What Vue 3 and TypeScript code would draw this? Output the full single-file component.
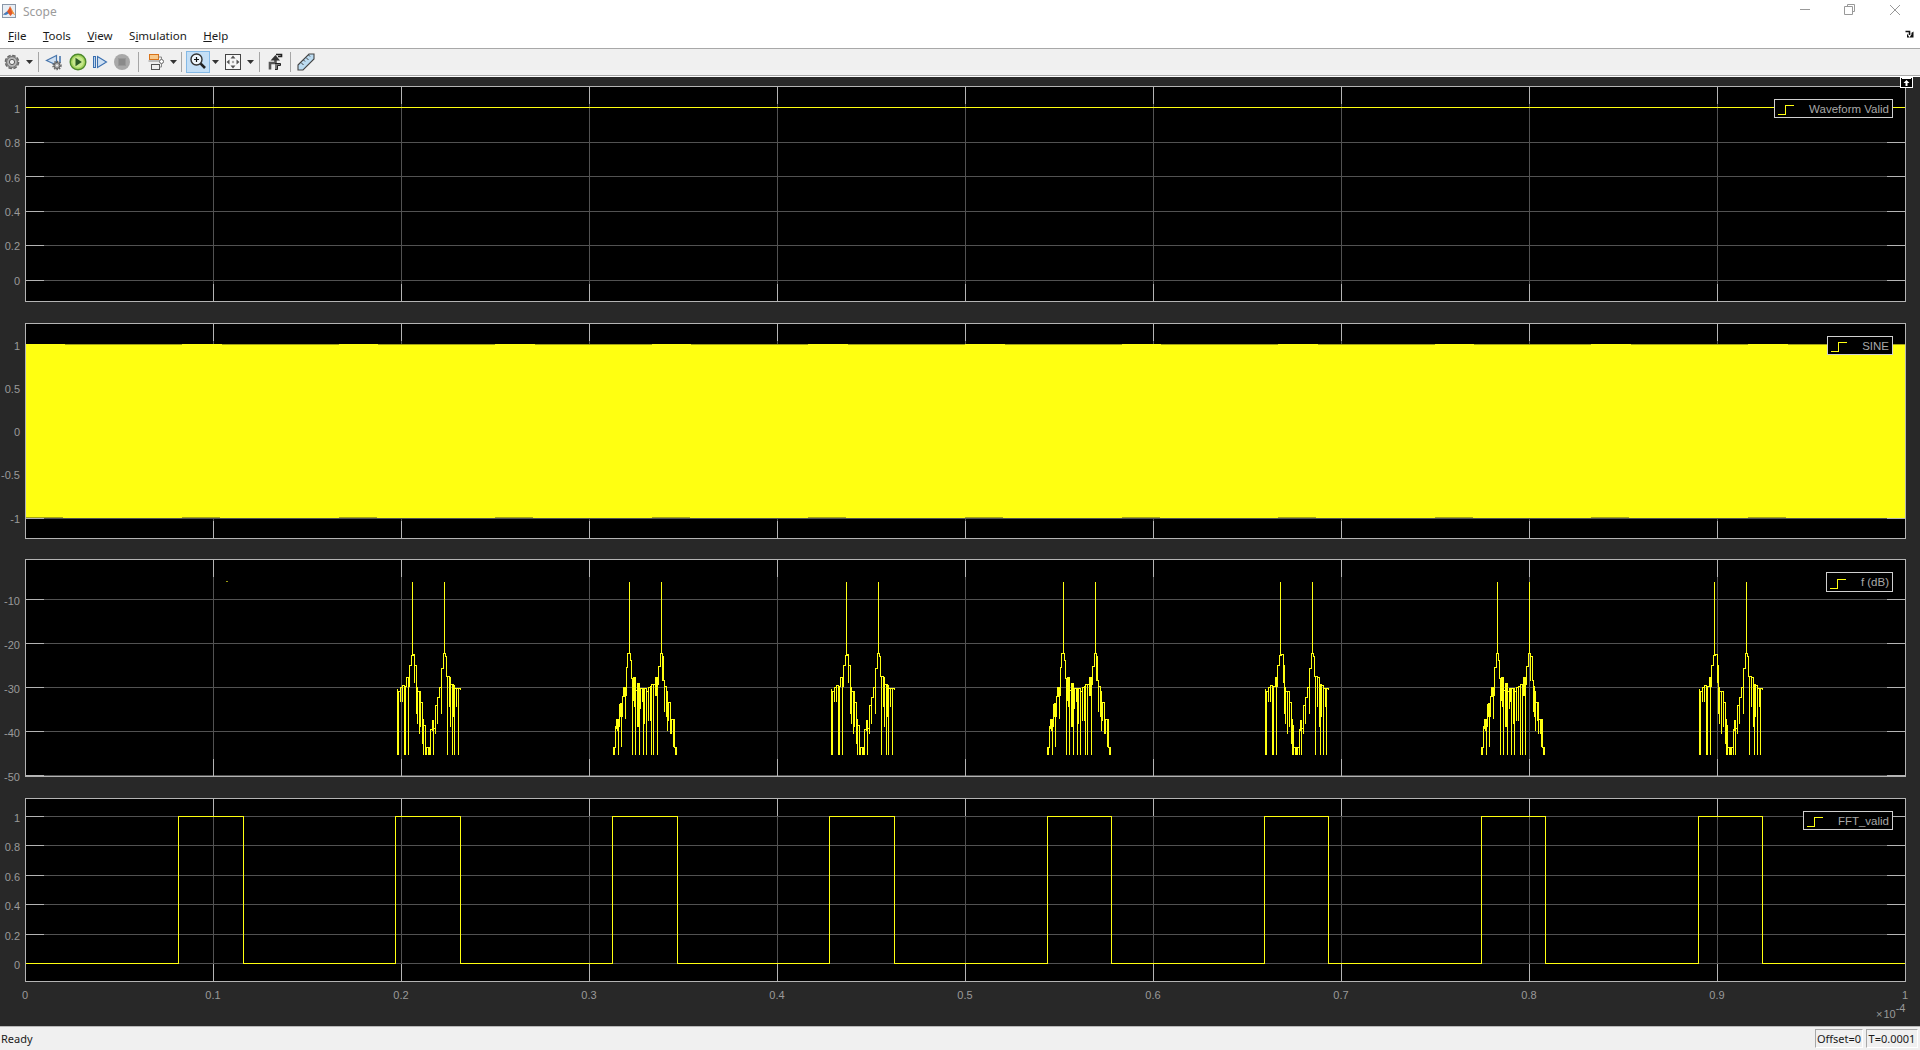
<script setup lang="ts">
type Tick = { label: string; y: number; base?: number }
type Entry = [number, number, number?]

interface Axis {
  name: string
  top: number
  height: number
  boxBottom: number
  ticks: Tick[]
  legendTop: number
  legendHeight: number
}

const xTicks = Array.from({ length: 11 }, (_, i) => ({
  x: 25.5 + i * 188,
  label: i === 0 ? '0' : i === 10 ? '1' : `0.${i}`,
}))

const axes: Axis[] = [
  {
    name: 'Waveform Valid', top: 86, height: 217, boxBottom: 301.5, legendTop: 13, legendHeight: 19,
    ticks: [
      { label: '1', y: 107.5, base: 113 }, { label: '0.8', y: 142.5, base: 147 }, { label: '0.6', y: 176.5, base: 182 },
      { label: '0.4', y: 211.5, base: 216 }, { label: '0.2', y: 245.5, base: 250 }, { label: '0', y: 280.5, base: 285 },
    ],
  },
  {
    name: 'SINE', top: 323, height: 216, boxBottom: 538.5, legendTop: 13, legendHeight: 19,
    ticks: [
      { label: '1', y: 344.5, base: 350 }, { label: '0.5', y: 387.5, base: 393 }, { label: '0', y: 431.5, base: 436 },
      { label: '-0.5', y: 474.5, base: 479 }, { label: '-1', y: 518.5, base: 523 },
    ],
  },
  {
    name: 'f (dB)', top: 559, height: 219, boxBottom: 776.5, legendTop: 13, legendHeight: 20,
    ticks: [
      { label: '-10', y: 599.5 }, { label: '-20', y: 643.5 }, { label: '-30', y: 687.5 },
      { label: '-40', y: 731.5 }, { label: '-50', y: 775.5 },
    ],
  },
  {
    name: 'FFT_valid', top: 798, height: 228, boxBottom: 981.5, legendTop: 13, legendHeight: 19,
    ticks: [
      { label: '1', y: 816.5 }, { label: '0.8', y: 845.5 }, { label: '0.6', y: 875.5 },
      { label: '0.4', y: 904.5 }, { label: '0.2', y: 934.5 }, { label: '0', y: 963.5 },
    ],
  },
]

const PERIOD = 217.1

/* Spectrum trace read off the reference, in 3x crop coordinates. */
const clusterA: Entry[] = [
  [48, 388], [52, 395, 583], [54, 395, 583], [60, 383, 425], [66, 375, 425], [72, 378, 583], [75, 378, 583],
  [80, 352], [85, 380, 583], [88, 315], [94, 285], [96, 285, 64], [100, 283], [104, 315, 368], [108, 383, 460],
  [112, 395, 490], [118, 395, 520], [122, 428, 500], [128, 478, 550], [131, 495, 583], [136, 563, 583],
  [140, 563, 583], [144, 563, 583], [147, 563, 583], [152, 508, 583], [156, 480, 510], [160, 505, 583],
  [165, 435, 520], [172, 412, 490], [178, 382, 410], [184, 325, 460], [190, 280], [193, 280, 64], [196, 290],
  [199, 350], [202, 350, 583], [208, 352, 440], [212, 372, 500], [216, 372, 583], [219, 375, 470], [224, 385, 583],
  [230, 385, 440], [235, 385, 583], [240, 388],
]

const clusterB: Entry[] = [
  [40, 562, 583], [43, 562, 583], [46, 500], [49, 478, 505], [52, 478, 510], [55, 490, 583], [58, 432, 500],
  [61, 430, 470], [64, 430, 560], [67, 408, 470], [70, 382, 408], [73, 382, 408], [76, 405, 475], [80, 322],
  [84, 280], [88, 280, 64], [92, 300], [95, 355], [97, 355, 583], [101, 352, 420], [104, 352, 440], [107, 390, 583],
  [112, 370, 500], [115, 370, 500], [118, 395, 583], [123, 385, 445], [127, 385, 425], [130, 385, 583],
  [135, 385, 490], [140, 395, 583], [146, 382, 480], [151, 378, 480], [156, 372, 583], [162, 372, 583],
  [166, 352, 405], [169, 352, 405], [172, 372, 583], [176, 318], [181, 280], [184, 280, 64], [188, 290, 360],
  [192, 360], [195, 380, 455], [199, 395, 470], [203, 428, 510], [207, 428, 480], [212, 478, 520], [216, 478, 520],
  [220, 478, 560], [224, 562], [227, 562, 583], [230, 562, 583],
]

function px(v: number): number {
  return Math.floor(v) + 0.5
}

function tracePath(entries: Entry[], x0: number, origin: number): string {
  let d = ''
  entries.forEach(([zx, top, excursion], i) => {
    const x = px(x0 + (zx - origin) / 3)
    const y = px(560 + top / 3)
    d += i === 0 ? `M${x} ${y}` : `H${x}V${y}`
    if (excursion !== undefined) d += `V${px(560 + excursion / 3)}V${y}`
  })
  return d
}

const spectrum = Array.from({ length: 7 }, (_, k) => {
  const x0 = 396 + k * PERIOD
  return k % 2 === 0 ? tracePath(clusterA, x0, 48) : tracePath(clusterB, x0, 40)
}).join('')

const validPath = (() => {
  let d = 'M25.5 963.5'
  for (let k = 0; k < 8; k++) {
    const rise = px(178.6 + k * PERIOD)
    const fall = px(243.5 + k * 217)
    d += `H${rise}V816.5H${fall}V963.5`
  }
  return d + 'H1905.5'
})()

/* Faint aliasing bands along the edges of the sine fill. */
const sineEdges = (() => {
  let d = ''
  for (let k = -1; k < 12; k++) {
    const a = 65 + k * 156.6
    const b = 182 + k * 156.6
    const c = 220 + k * 156.6
    d += `M${Math.max(a, 26)} 344.5H${Math.min(b, 1905)}`
    d += `M${Math.max(b, 26)} 517.5H${Math.min(c, 1905)}`
  }
  return d
})()

const menu = [
  { key: 'F', rest: 'ile', pre: '' },
  { key: 'T', rest: 'ools', pre: '' },
  { key: 'V', rest: 'iew', pre: '' },
  { key: 'i', rest: 'mulation', pre: 'S' },
  { key: 'H', rest: 'elp', pre: '' },
]

const tools = [
  { id: 'gear', w: 24 }, { id: 'arrow', w: 10 }, { id: 'sep', w: 8 },
  { id: 'back', w: 24 }, { id: 'play', w: 23 }, { id: 'step', w: 22 }, { id: 'stop', w: 22 }, { id: 'sep', w: 11 },
  { id: 'block', w: 26 }, { id: 'arrow', w: 6 }, { id: 'sep', w: 10 },
  { id: 'zoom', w: 24 }, { id: 'arrow', w: 11 }, { id: 'fit', w: 24 }, { id: 'arrow', w: 10 }, { id: 'sep', w: 8 },
  { id: 'signal', w: 24 }, { id: 'sep', w: 7 }, { id: 'ruler', w: 24 },
]
</script>

<template>
  <div class="window">
    <header class="titlebar">
      <svg class="logo" width="14" height="14" viewBox="0 0 14 14">
        <rect x="0.5" y="0.5" width="13" height="13" fill="#e8eef5" stroke="#8a97a8" />
        <path d="M1 10.5 L5 7.5 L7 4.5 L8 2 L10 6 L13 11 L10.5 9.5 L8.5 12 L6.5 9.5 Z" fill="#e2582a" />
        <path d="M1 10.5 L5 7.5 L6.5 9.5 L4 11 Z" fill="#3f7fc4" />
        <path d="M8 2 L10 6 L13 11 L10.5 9.5 Z" fill="#f2a03a" />
      </svg>
      <span class="title">Scope</span>
      <div class="winctl">
        <svg width="12" height="12" viewBox="0 0 12 12"><path d="M1 5.5H11" stroke="#999" fill="none" /></svg>
        <svg width="12" height="12" viewBox="0 0 12 12">
          <path d="M3.5 2.5V0.5H10.5V7.5H8.5M0.5 2.5H8.5V10.5H0.5Z" stroke="#999" fill="none" />
        </svg>
        <svg width="12" height="12" viewBox="0 0 12 12"><path d="M1 1L11 11M11 1L1 11" stroke="#999" fill="none" /></svg>
      </div>
    </header>

    <nav class="menubar">
      <span v-for="m in menu" :key="m.key" class="menu-item">{{ m.pre }}<u>{{ m.key }}</u>{{ m.rest }}</span>
      <svg class="undock" width="9" height="8" viewBox="0 0 9 8">
        <path d="M0.5 1.5H4.5V5" stroke="#111" stroke-width="1.6" fill="none" />
        <path d="M2 3.5L4.5 7.5L7 3.5H5.5L8.5 1.5V7.5H2Z" fill="#111" />
      </svg>
    </nav>

    <div class="toolbar">
      <div
        v-for="(t, i) in tools"
        :key="i"
        class="tool"
        :class="{ 'tool-active': t.id === 'zoom' }"
        :style="{ width: t.w + 'px' }"
      >
        <span v-if="t.id === 'sep'" class="sep"></span>

        <svg v-else-if="t.id === 'arrow'" class="ic" width="7" height="4" viewBox="0 0 7 4">
          <path d="M0 0H7L3.5 4Z" fill="#333" />
        </svg>

        <svg v-else-if="t.id === 'gear'" class="ic" width="16" height="16" viewBox="0 0 16 16">
          <circle cx="8" cy="8" r="6.6" fill="#c0c0c0" stroke="#666" stroke-width="1.5" stroke-dasharray="3.6 1.58" />
          <circle cx="8" cy="8" r="5.4" fill="#b8b8b8" stroke="#6a6a6a" />
          <circle cx="8" cy="8" r="2.6" fill="#f0f0f0" stroke="#5a5a5a" />
        </svg>

        <svg v-else-if="t.id === 'back'" class="ic" width="20" height="18" viewBox="0 0 20 18">
          <path d="M12.5 2.5V12L2.5 7.5Z" fill="#cfe0f2" stroke="#4a77ad" stroke-width="1.2" />
          <path d="M16 3V10" stroke="#4a77ad" stroke-width="1.6" />
          <circle cx="13" cy="12.5" r="4" fill="none" stroke="#666" stroke-width="1.4" stroke-dasharray="1.5 1.1" />
          <circle cx="13" cy="12.5" r="3" fill="#a8a8a8" stroke="#555" />
          <circle cx="13" cy="12.5" r="1.1" fill="#eee" />
        </svg>

        <svg v-else-if="t.id === 'play'" class="ic" width="18" height="18" viewBox="0 0 18 18">
          <circle cx="9" cy="9" r="7.8" fill="#a6d45f" stroke="#4d8a2c" stroke-width="1.4" />
          <circle cx="9" cy="9" r="5.6" fill="#c6e88d" />
          <path d="M6.5 4.8L12.8 9L6.5 13.2Z" fill="#2c5a26" />
        </svg>

        <svg v-else-if="t.id === 'step'" class="ic" width="16" height="16" viewBox="0 0 16 16">
          <rect x="1.5" y="2.5" width="2" height="11" fill="#bcd6f0" stroke="#3a6fb0" />
          <path d="M5.5 2.5V13.5L14.5 8Z" fill="#cfe0f2" stroke="#3a6fb0" stroke-width="1.1" />
        </svg>

        <svg v-else-if="t.id === 'stop'" class="ic" width="18" height="18" viewBox="0 0 18 18">
          <circle cx="9" cy="9" r="8" fill="#a8a8a8" />
          <rect x="5.5" y="5.5" width="7" height="7" fill="#8a8a8a" stroke="#989898" />
        </svg>

        <svg v-else-if="t.id === 'block'" class="ic" width="20" height="18" viewBox="0 0 20 18">
          <rect x="2.5" y="1.5" width="9" height="5" fill="#f7c98c" stroke="#d9731a" />
          <rect x="4.5" y="11.5" width="8" height="5" fill="#f0f0f0" stroke="#555" />
          <circle cx="14.5" cy="8.5" r="2" fill="#fff" stroke="#666" />
          <path d="M11.5 4H14.5V6.5M14.5 10.5V14H12.5M1.5 8H12.5" stroke="#888" fill="none" />
        </svg>

        <svg v-else-if="t.id === 'zoom'" class="ic" width="20" height="20" viewBox="0 0 20 20">
          <circle cx="8.5" cy="7.5" r="5.5" fill="#eef5fb" stroke="#333" stroke-width="1.4" />
          <path d="M6 7.5H11M8.5 5V10" stroke="#111" stroke-width="1.2" />
          <path d="M12.7 11.7L17 16" stroke="#222" stroke-width="2.6" />
        </svg>

        <svg v-else-if="t.id === 'fit'" class="ic" width="18" height="18" viewBox="0 0 18 18">
          <rect x="1.5" y="1.5" width="15" height="15" fill="#f7f7f7" stroke="#444" />
          <path d="M9 2.5L11.5 5.5H6.5ZM9 15.5L6.5 12.5H11.5ZM2.5 9L5.5 6.5V11.5ZM15.5 9L12.5 11.5V6.5Z" fill="#555" />
          <circle cx="9" cy="9" r="1.2" fill="#aaa" />
        </svg>

        <svg v-else-if="t.id === 'signal'" class="ic" width="16" height="18" viewBox="0 0 16 18">
          <path d="M3 16.5V10H8.5V5.5" fill="none" stroke="#555" stroke-width="2.6" />
          <path d="M9 1.5H14.5V3.5H11" fill="none" stroke="#222" stroke-width="1.6" />
          <path d="M8.5 2L13 7.5H3.5Z" fill="#333" />
          <path d="M8 10.5H13.5V12.5H10.5V16.5H8" fill="#777" stroke="#222" />
        </svg>

        <svg v-else-if="t.id === 'ruler'" class="ic" width="18" height="18" viewBox="0 0 18 18">
          <path d="M1 12L12 1H17V6L6 17H1Z" fill="#bcdcf2" stroke="#444" stroke-width="1.1" />
          <path d="M4 9.5L6.5 12M6.5 7L8 8.5M9 4.5L11.5 7M11.5 2L13 3.5" stroke="#444" />
        </svg>
      </div>
    </div>

    <main class="scope">
      <button class="restore" type="button" aria-label="Undock">
        <svg width="11" height="8" viewBox="0 0 11 8">
          <path d="M1 0.5H10" stroke="#fff" />
          <path d="M5.5 2L8.5 5H6.5V8H4.5V5H2.5Z" fill="#fff" />
        </svg>
      </button>

      <section v-for="(ax, idx) in axes" :key="ax.name" class="axes">
        <svg class="plot" width="1920" :height="ax.height" :viewBox="`0 ${ax.top} 1920 ${ax.height}`">
          <rect x="25.5" :y="ax.top + 0.5" width="1880" :height="ax.boxBottom - ax.top - 0.5" fill="#000" />

          <!-- grid -->
          <g shape-rendering="crispEdges" fill="none">
            <path
              v-for="t in ax.ticks"
              :key="'g' + t.label"
              :d="`M25.5 ${t.y}H1905.5`"
              stroke="#525252"
            />
            <path
              v-for="t in xTicks.slice(1, 10)"
              :key="'v' + t.label"
              :d="`M${t.x} ${ax.top}V${ax.boxBottom}`"
              stroke="#525252"
            />
            <path
              v-for="t in ax.ticks"
              :key="'tk' + t.label"
              :d="`M25.5 ${t.y}H44M1887 ${t.y}H1905.5`"
              stroke="#b4b4b4"
            />
            <path
              v-for="t in xTicks.slice(1, 10)"
              :key="'tv' + t.label"
              :d="`M${t.x} ${ax.top}V${ax.top + 18}M${t.x} ${ax.boxBottom - 18}V${ax.boxBottom}`"
              stroke="#b4b4b4"
            />
          </g>

          <!-- traces -->
          <g v-if="idx === 0" shape-rendering="crispEdges">
            <path d="M25.5 281V107.5H1905.5" fill="none" stroke="#ffff11" />
          </g>
          <g v-else-if="idx === 1" shape-rendering="crispEdges">
            <rect x="26" y="344" width="1880" height="174" fill="#ffff11" />
            <path :d="sineEdges" fill="none" stroke="#a3a315" />
          </g>
          <g v-else-if="idx === 2" shape-rendering="crispEdges">
            <path :d="spectrum" fill="none" stroke="#ffff11" />
            <path d="M226 581.5H228" stroke="#9a9a10" />
          </g>
          <g v-else shape-rendering="crispEdges">
            <path :d="validPath" fill="none" stroke="#ffff11" />
          </g>

          <rect
            x="25.5"
            :y="ax.top + 0.5"
            width="1880"
            :height="ax.boxBottom - ax.top - 0.5"
            fill="none"
            stroke="#b4b4b4"
            shape-rendering="crispEdges"
          />

          <!-- labels -->
          <g class="tick-labels">
            <text
              v-for="t in ax.ticks"
              :key="'l' + t.label"
              x="20"
              :y="t.base ?? t.y + 5.5"
              text-anchor="end"
            >{{ t.label }}</text>
          </g>
          <g v-if="idx === 3" class="tick-labels">
            <text v-for="t in xTicks" :key="'x' + t.label" :x="t.x - 0.5" y="999" text-anchor="middle">{{ t.label }}</text>
            <text x="1876" y="1018">×<tspan dx="1">10</tspan><tspan dy="-6">-4</tspan></text>
          </g>
        </svg>

        <div class="legend" :style="{ top: ax.legendTop + 'px', height: ax.legendHeight + 'px' }">
          <svg width="20" height="13" viewBox="0 0 20 13">
            <path d="M0 12.5H7.5V3.5H16" fill="none" stroke="#ffff11" shape-rendering="crispEdges" />
          </svg>
          <span class="legend-text">{{ ax.name }}</span>
        </div>
      </section>
    </main>

    <footer class="statusbar">
      <span class="ready">Ready</span>
      <div class="status-cells">
        <span class="cell cell-offset">Offset=0</span>
        <span class="cell cell-time">T=0.0001</span>
      </div>
    </footer>
  </div>
</template>

<style>
html,
body {
  margin: 0;
  background: #f0f0f0;
  overflow: hidden;
}
</style>

<style scoped>
.window {
  width: 1920px;
  height: 1050px;
  display: flex;
  flex-direction: column;
  font-family: "Noto Sans", "Open Sans", sans-serif;
  background: #fff;
  overflow: hidden;
}

.titlebar {
  height: 28px;
  flex: none;
  display: flex;
  align-items: center;
  padding-left: 2px;
  background: #fff;
}
.logo {
  margin-top: -6px;
}
.title {
  margin-left: 7px;
  margin-top: -5px;
  font-size: 12px;
  color: #9b9b9b;
}
.winctl {
  margin-left: auto;
  margin-top: -9px;
  display: flex;
  gap: 33px;
  padding-right: 19px;
}

.menubar {
  height: 20px;
  flex: none;
  display: flex;
  align-items: center;
  gap: 16.5px;
  padding-left: 8px;
  position: relative;
  background: #fff;
  border-bottom: 1px solid #a8a8a8;
  font-size: 11.5px;
  color: #1a1a1a;
}
.menu-item {
  line-height: 16px;
  margin-top: -4px;
}
.undock {
  margin-left: auto;
  margin-right: 6px;
  margin-top: -8px;
}

.toolbar {
  height: 26px;
  flex: none;
  display: flex;
  align-items: center;
  background: #f0f0f0;
  border-bottom: 1px solid #a8a8a8;
}
.tool {
  height: 22px;
  flex: none;
  display: flex;
  align-items: center;
  justify-content: center;
  box-sizing: border-box;
}
.ic {
  flex: none;
}
.tool-active {
  background: #c4dff6;
  border: 1px solid #84b9e6;
}
.sep {
  width: 1px;
  height: 20px;
  background: #a6a6a6;
}

.scope {
  position: relative;
  flex: 1;
  display: flex;
  flex-direction: column;
  gap: 20px;
  padding-top: 9px;
  border-top: 1px solid #fff;
  background: #282828;
  min-height: 0;
}
.restore {
  position: absolute;
  right: 7px;
  top: 0;
  z-index: 1;
  width: 13px;
  height: 11px;
  padding: 0;
  display: flex;
  align-items: flex-start;
  justify-content: center;
  background: #000;
  border: 1px solid #fff;
  box-sizing: border-box;
}

.axes {
  position: relative;
  flex: none;
}
.plot {
  display: block;
  overflow: visible;
}
.tick-labels {
  font-family: "Liberation Sans", Arial, sans-serif;
  font-size: 11px;
  fill: #9a9a9a;
}

.legend {
  position: absolute;
  right: 27px;
  display: flex;
  align-items: center;
  box-sizing: border-box;
  padding: 0 3px 0 3px;
  background: #000;
  border: 1px solid #d0d0d0;
}
.legend svg {
  flex: none;
}
.legend-text {
  margin-left: 11px;
  font-family: "Liberation Sans", Arial, sans-serif;
  font-size: 11.5px;
  color: #a8a8a8;
  white-space: nowrap;
}

.statusbar {
  height: 24px;
  flex: none;
  display: flex;
  align-items: center;
  box-sizing: border-box;
  border-top: 1px solid #b8b8b8;
  background: #f0f0f0;
  font-size: 11px;
  color: #1a1a1a;
}
.ready {
  padding-left: 1px;
}
.status-cells {
  margin-left: auto;
  display: flex;
  gap: 3px;
  padding-right: 2px;
}
.cell {
  height: 19px;
  line-height: 18px;
  box-sizing: border-box;
  text-align: center;
  border-top: 1px solid #a8a8a8;
  border-left: 1px solid #a8a8a8;
  border-right: 1px solid #fff;
  border-bottom: 1px solid #fff;
}
.cell-offset {
  width: 48px;
}
.cell-time {
  width: 52px;
}
</style>
